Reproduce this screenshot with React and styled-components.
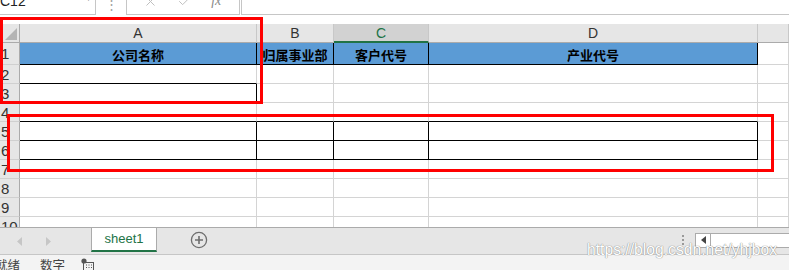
import styled, { createGlobalStyle } from "styled-components";
import { X, Check } from "lucide-react";

const GlobalStyle = createGlobalStyle`
  html, body {
    margin: 0;
    padding: 0;
    background: #fff;
  }
  body {
    width: 789px;
    height: 270px;
    overflow: hidden;
    font-family: "Liberation Sans", Arial, sans-serif;
  }
`;

// E is only a sliver at the right edge, its letter sits off-screen
const COLS = [
  { key: "A", label: "A" },
  { key: "B", label: "B" },
  { key: "C", label: "C", active: true },
  { key: "D", label: "D" },
  { key: "E", label: "" },
];

const HEAD = ["公司名称", "归属事业部", "客户代号", "产业代号"];

// black borders drawn per row (column indexes)
const BORDERS = {
  1: { right: [0, 1, 2, 3], bottom: [0, 1, 2, 3] },
  2: { right: [], bottom: [0] },
  3: { right: [0], bottom: [0] },
  4: { right: [], bottom: [0, 1, 2, 3] },
  5: { right: [0, 1, 2, 3], bottom: [0, 1, 2, 3] },
  6: { right: [0, 1, 2, 3], bottom: [0, 1, 2, 3] },
};

const ROWS = [1, 2, 3, 4, 5, 6, 7, 8, 9, 10];

export default function App() {
  return (
    <Page>
      <GlobalStyle />
      <FormulaBar>
        <NameBox>
          <span>C12</span>
          <Caret>▾</Caret>
        </NameBox>
        <Splitter>⋮</Splitter>
        <ActionBox>
          <X size={15} strokeWidth={1.6} />
          <Check size={15} strokeWidth={1.6} />
          <Fx>fx</Fx>
        </ActionBox>
        <InputBox />
      </FormulaBar>

      <Sheet>
        <Corner>
          <svg width="14" height="14" viewBox="0 0 14 14">
            <polygon points="13,1 13,13 1,13" fill="#b4b4b4" />
          </svg>
        </Corner>
        {COLS.map((c) => (
          <ColHead key={c.key} $active={c.active}>
            {c.label}
          </ColHead>
        ))}
        {ROWS.map((r) => {
          const b = BORDERS[r] || { right: [], bottom: [] };
          return [
            <RowHead key={"h" + r}>{r}</RowHead>,
            ...COLS.map((c, i) => (
              <Cell
                key={r + c.key}
                $fill={r === 1 && i < 4}
                $right={b.right.includes(i)}
                $bottom={b.bottom.includes(i)}
              >
                {r === 1 ? HEAD[i] : ""}
              </Cell>
            )),
          ];
        })}
      </Sheet>

      <TabBar>
        <Nav>
          <svg width="6" height="9" viewBox="0 0 6 9">
            <polygon points="5,0 5,9 0,4.5" fill="#c6c6c6" />
          </svg>
          <svg width="6" height="9" viewBox="0 0 6 9">
            <polygon points="1,0 1,9 6,4.5" fill="#c6c6c6" />
          </svg>
        </Nav>
        <Tab>sheet1</Tab>
        <AddSheet>
          <svg width="18" height="18" viewBox="0 0 18 18">
            <circle cx="9" cy="9" r="7.6" fill="none" stroke="#6e6e6e" strokeWidth="1.3" />
            <path d="M9 5v8M5 9h8" stroke="#6e6e6e" strokeWidth="1.6" />
          </svg>
        </AddSheet>
        <Spacer />
        <Grip>
          <i />
          <i />
          <i />
        </Grip>
        <HScroll>
          <ScrollBtn>
            <svg width="5" height="8" viewBox="0 0 5 8">
              <polygon points="5,0 5,8 0,4" fill="#444" />
            </svg>
          </ScrollBtn>
          <Track />
        </HScroll>
      </TabBar>

      <StatusBar>
        <Status $first>就绪</Status>
        <Status>数字</Status>
        <svg width="13" height="13" viewBox="0 0 13 13">
          <circle cx="3" cy="3" r="2.6" fill="#555" />
          <rect x="2.5" y="4.5" width="10" height="8" fill="none" stroke="#555" />
          <path d="M5 7h1M7.5 7h1M10 7h1M5 9.5h1M7.5 9.5h1M10 9.5h1" stroke="#555" />
        </svg>
      </StatusBar>

      <Mark $x={0} $y={17} $w={263} $h={87} />
      <Mark $x={7} $y={114} $w={767} $h={58} />
      <Watermark>https://blog.csdn.net/yhjbox</Watermark>
    </Page>
  );
}

const Page = styled.div`
  position: relative;
  width: 789px;
  height: 270px;
  overflow: hidden;
  display: flex;
  flex-direction: column;
`;

const FormulaBar = styled.div`
  height: 15px;
  margin-bottom: 9px;
  display: flex;
  align-items: flex-end;
  overflow: hidden;
  flex-shrink: 0;
`;

const Box = styled.div`
  height: 24px;
  box-sizing: border-box;
  border: 1px solid #c6c6c6;
  background: #fff;
  flex-shrink: 0;
`;

const NameBox = styled(Box)`
  width: 98px;
  margin-left: -2px;
  display: flex;
  align-items: center;
  justify-content: space-between;
  padding: 0 4px 0 1px;
  line-height: 22px;
  font-size: 14px;
  color: #222;

  span:first-child {
    margin-top: -5px;
  }
`;

const Caret = styled.span`
  font-size: 10px;
  color: #666;
  margin-top: -10px;
`;

const Splitter = styled.div`
  width: 30px;
  text-align: center;
  color: #a0a0a0;
  font-size: 13px;
  line-height: 20px;
  margin-top: -6px;
`;

const ActionBox = styled(Box)`
  width: 114px;
  display: flex;
  align-items: center;
  justify-content: space-around;
  padding: 0 8px 4px 6px;
  color: #c0c0c0;
`;

const Fx = styled.span`
  font-family: "Liberation Serif", serif;
  font-style: italic;
  font-size: 14px;
  color: #8a8a8a;
`;

const InputBox = styled(Box)`
  flex: 1;
  margin-left: 1px;
  border-right: none;
`;

const Sheet = styled.div`
  display: grid;
  grid-template-columns: 20px 237px 77px 95px 329px 31px;
  grid-template-rows: 19px 22px repeat(9, 19px);
  height: 203px;
  overflow: hidden;
  flex-shrink: 0;
`;

const HeadBase = styled.div`
  box-sizing: border-box;
  background: #e6e6e6;
  color: #333;
  font-size: 14px;
`;

const Corner = styled(HeadBase)`
  border-right: 1px solid #ababab;
  border-bottom: 1px solid #ababab;
  display: flex;
  align-items: flex-end;
  justify-content: flex-end;
  padding: 0 1px 1px 0;
`;

const ColHead = styled(HeadBase)`
  display: flex;
  align-items: center;
  justify-content: center;
  background: ${(p) => (p.$active ? "#d2d2d2" : "#e6e6e6")};
  color: ${(p) => (p.$active ? "#217346" : "#333")};
  border-right: 1px solid #c8c8c8;
  border-bottom: ${(p) => (p.$active ? "2px solid #217346" : "1px solid #ababab")};
`;

const RowHead = styled(HeadBase)`
  display: flex;
  align-items: center;
  border-right: 1px solid #ababab;
  border-bottom: 1px solid #d0d0d0;
  padding-left: 1px;
  font-size: 15px;
`;

const Cell = styled.div`
  box-sizing: border-box;
  display: flex;
  align-items: center;
  justify-content: center;
  white-space: nowrap;
  background: ${(p) => (p.$fill ? "#5b9bd5" : "#fff")};
  border-right: 1px solid ${(p) => (p.$right ? "#000" : "#d4d4d4")};
  border-bottom: 1px solid ${(p) => (p.$bottom ? "#000" : "#d4d4d4")};
  font-family: "Noto Sans CJK SC", sans-serif;
  font-weight: 700;
  font-size: 13px;
  color: #000;
  padding-top: 1px;
`;

const TabBar = styled.div`
  height: 28px;
  box-sizing: border-box;
  border-top: 1px solid #ababab;
  border-bottom: 1px solid #c6c6c6;
  background: #e6e6e6;
  display: flex;
  align-items: stretch;
  flex-shrink: 0;
`;

const Nav = styled.div`
  width: 91px;
  box-sizing: border-box;
  display: flex;
  align-items: center;
  gap: 22px;
  padding-left: 17px;
`;

const Tab = styled.div`
  width: 66px;
  box-sizing: border-box;
  background: #fff;
  border-left: 1px solid #ababab;
  border-right: 1px solid #ababab;
  border-bottom: 2px solid #217346;
  margin-bottom: 2px;
  display: flex;
  align-items: center;
  justify-content: center;
  font-size: 13px;
  color: #217346;
  padding-bottom: 1px;
`;

const AddSheet = styled.div`
  width: 84px;
  display: flex;
  align-items: center;
  justify-content: center;
  padding-bottom: 2px;
`;

const Spacer = styled.div`
  flex: 1;
`;

const Grip = styled.div`
  width: 16px;
  display: flex;
  flex-direction: column;
  align-items: center;
  justify-content: center;
  gap: 2px;
  margin-right: 4px;
  padding-bottom: 2px;

  i {
    width: 2px;
    height: 2px;
    background: #999;
  }
`;

const HScroll = styled.div`
  width: 94px;
  height: 15px;
  align-self: center;
  margin-bottom: 2px;
  display: flex;
  box-sizing: border-box;
  border: 1px solid #ababab;
  border-right: none;
  background: #fff;
`;

const ScrollBtn = styled.div`
  width: 15px;
  box-sizing: border-box;
  border-right: 1px solid #ababab;
  display: flex;
  align-items: center;
  justify-content: center;
`;

const Track = styled.div`
  flex: 1;
`;

const StatusBar = styled.div`
  flex: 1;
  background: #f3f3f3;
  display: flex;
  align-items: flex-start;
  gap: 16px;
  padding-top: 3px;
  overflow: hidden;

  svg {
    flex-shrink: 0;
  }
`;

const Status = styled.span`
  font-family: "Noto Sans CJK SC", sans-serif;
  font-size: 12.5px;
  line-height: 13px;
  color: #444;
  margin-left: ${(p) => (p.$first ? "-5px" : "4px")};
`;

const Mark = styled.div`
  position: absolute;
  left: ${(p) => p.$x}px;
  top: ${(p) => p.$y}px;
  width: ${(p) => p.$w}px;
  height: ${(p) => p.$h}px;
  box-sizing: border-box;
  border: 3px solid #ff0000;
  pointer-events: none;
`;

const Watermark = styled.div`
  position: absolute;
  left: 587px;
  top: 241px;
  font-size: 15.7px;
  color: #fff;
  text-shadow: 0 0 1px #8a8a8a, 0 0 1px #8a8a8a;
  white-space: nowrap;
  pointer-events: none;
`;
